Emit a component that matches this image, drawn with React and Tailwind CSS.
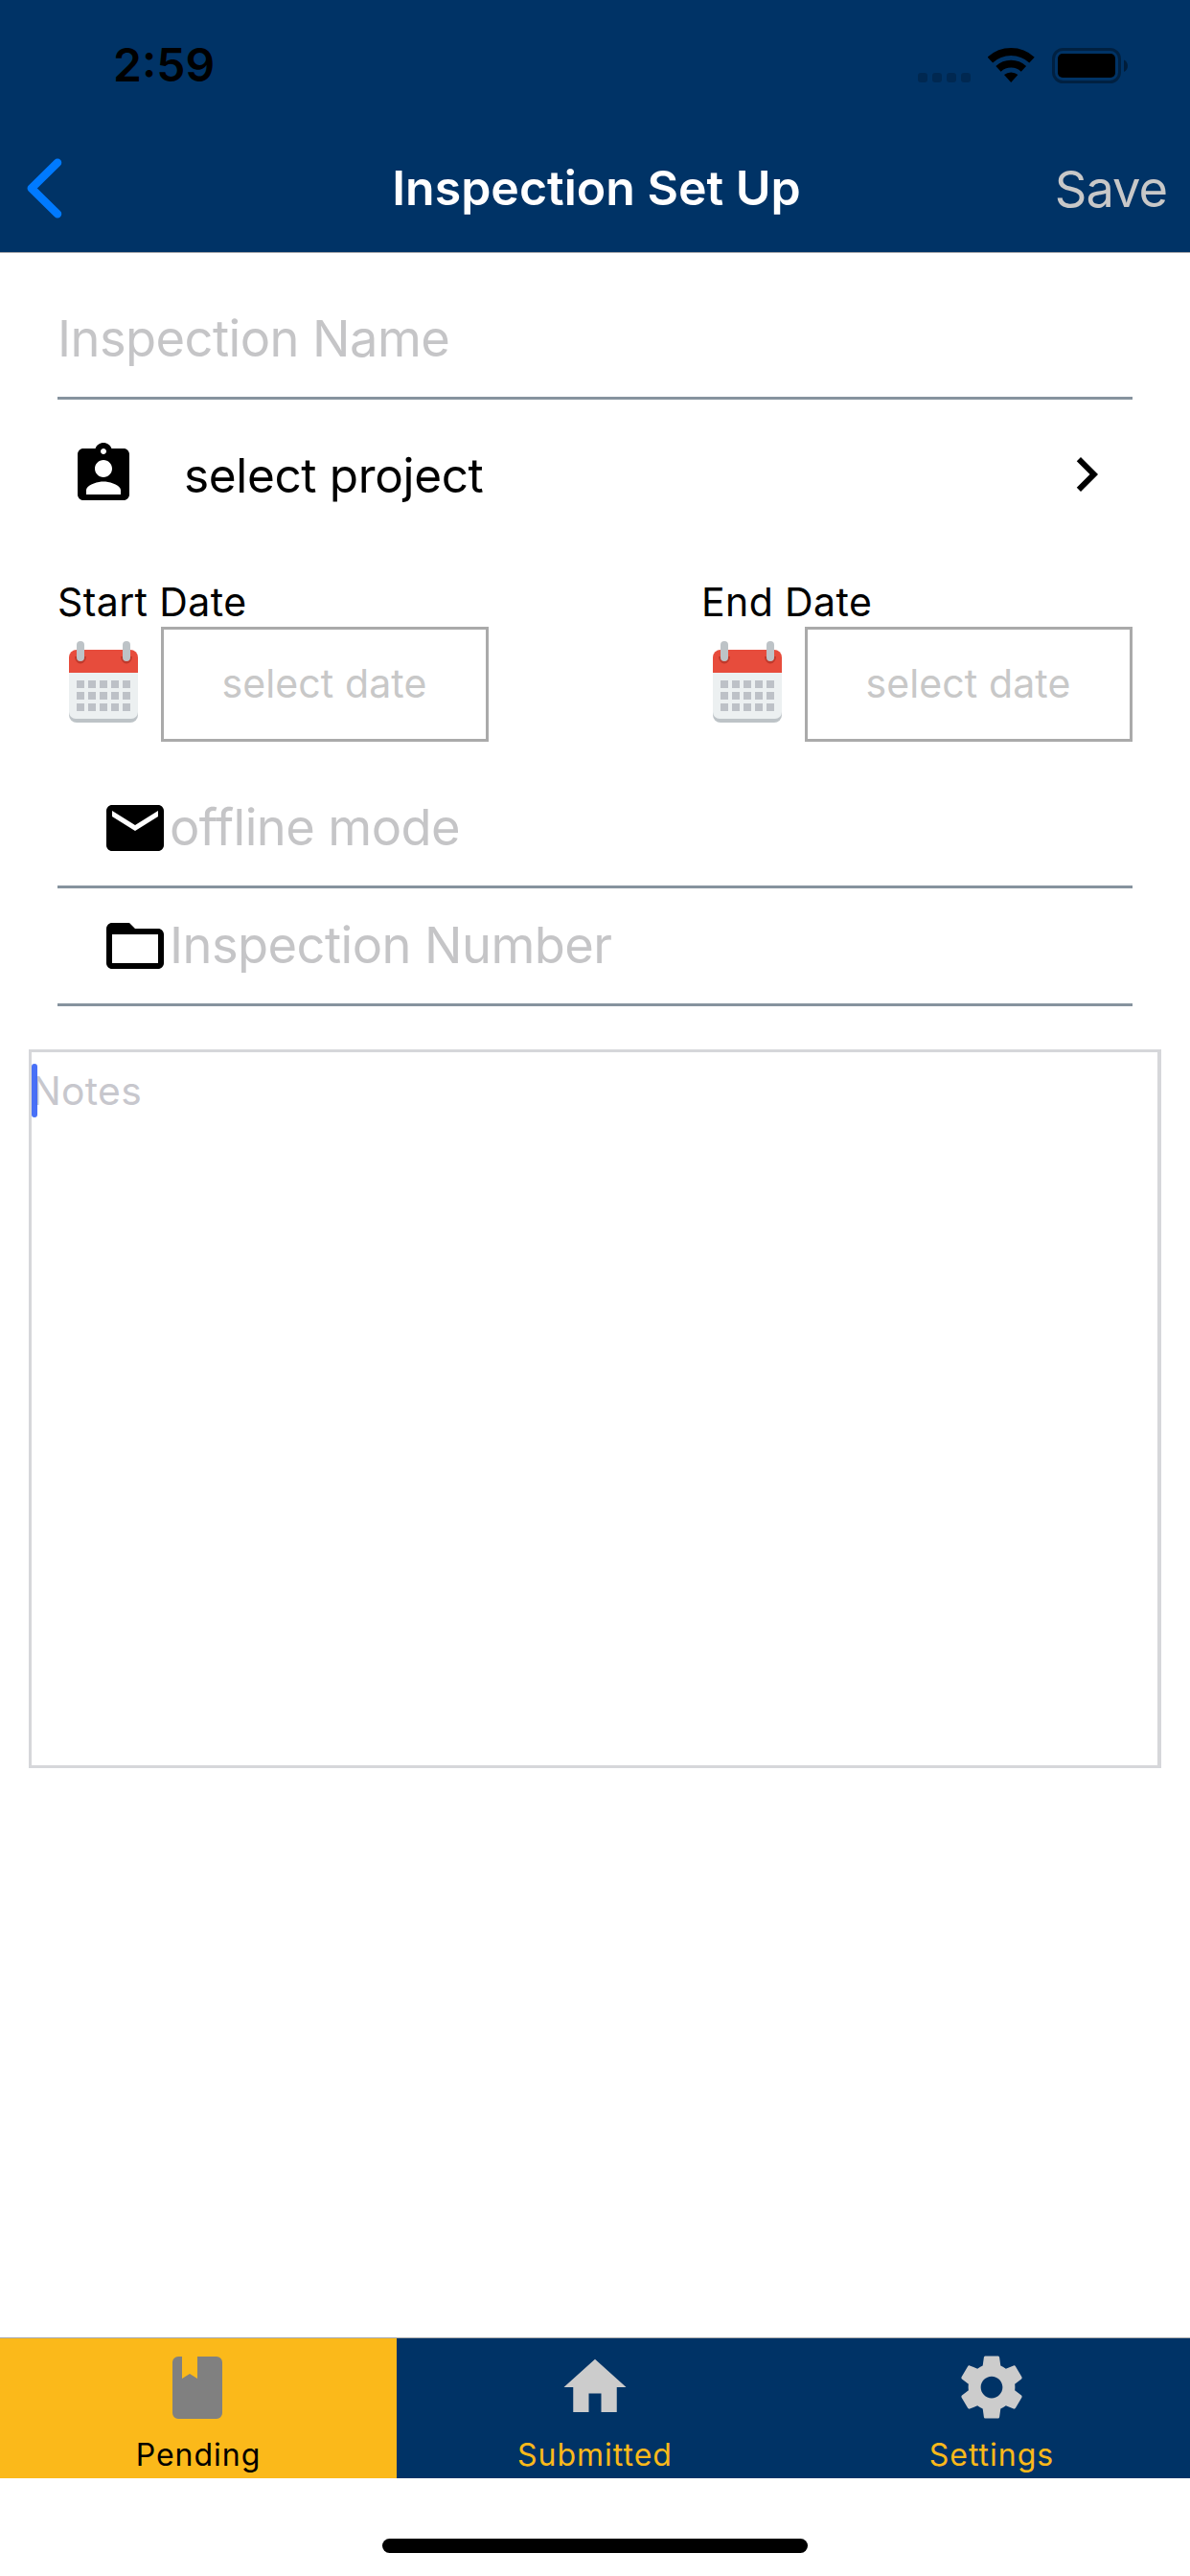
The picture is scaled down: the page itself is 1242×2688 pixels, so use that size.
import { MdAssignmentInd, MdChevronRight, MdEmail, MdFolderOpen, MdHome } from "react-icons/md";

function StatusBar() {
  return (
    <div className="flex h-[132px] items-center justify-between pt-1 pr-[65px] pl-[118px]">
      <span className="text-[48px] leading-[60px] font-semibold text-black">2:59</span>
      <div className="flex h-[37px] items-start">
        <div className="mt-[26px] mr-[18px] flex gap-[5px]">
          {[0, 1, 2, 3].map((i) => (
            <span key={i} className="size-[10px] rounded-[3px] bg-black/20" />
          ))}
        </div>
        <svg className="mr-[18px] h-[36px] w-[49px]" viewBox="0 0 49 36" fill="none" stroke="#000">
          <path d="M2.4 12.6a32 32 0 0 1 43.6 0" strokeWidth="8" />
          <path d="M11 21.8a19.4 19.4 0 0 1 26.4 0" strokeWidth="7.8" />
          <path d="M24.2 36l-7.2-8a11.3 11.3 0 0 1 14.4 0z" fill="#000" stroke="none" />
        </svg>
        <svg className="h-[37px] w-[79px]" viewBox="0 0 79 37">
          <rect x="1.5" y="1.5" width="69" height="34" rx="10" fill="none" stroke="#000" strokeOpacity=".36" strokeWidth="3" />
          <rect x="6" y="6" width="60" height="25" rx="5" />
          <path d="M75 12.5c5.3 2.2 5.3 10.3 0 12.5z" fillOpacity=".42" />
        </svg>
      </div>
    </div>
  );
}

function Header() {
  return (
    <header className="h-[264px] border-b border-[#a7a7aa] bg-[#003366]">
      <StatusBar />
      <div className="grid h-[131px] grid-cols-[1fr_auto_1fr] items-center pr-[24px] pl-[27px]">
        <svg className="-mt-[2px] h-[63px] w-[38px]" viewBox="0 0 38 63" fill="none" stroke="#007aff" strokeWidth="8.5" strokeLinecap="round" strokeLinejoin="round">
          <path d="M33 4.8L5.8 31.5 33 58.200" />
        </svg>
        <h1 className="-mt-[3px] text-[50px] leading-[60px] font-semibold text-white">Inspection Set Up</h1>
        <span className="-mt-[1px] justify-self-end text-[52.4px] leading-[60px] tracking-[-1px] text-[#c8c8c8]">Save</span>
      </div>
    </header>
  );
}

function Field({ icon, label }) {
  return (
    <div className="flex h-[123px] items-center border-b-[3px] border-[#86939e] text-[52.4px] leading-[60px] tracking-[-0.55px] text-[#c5c5c7]">
      {icon}
      <span className="-mt-[3px]">{label}</span>
    </div>
  );
}

function CalendarIcon() {
  return (
    <svg className="mx-[12px] h-[88px] w-[84px] shrink-0" viewBox="0 0 84 88">
      <path d="M0 70v9a8 8 0 0 0 8 8h56a8 8 0 0 0 8-8v-9z" fill="#bdc3c7" />
      <path d="M0 30v46a7 7 0 0 0 7 7h58a7 7 0 0 0 7-7V30z" fill="#ecf0f1" />
      <path d="M0 35V19a8 8 0 0 1 8-8h56a8 8 0 0 1 8 8v16z" fill="#e74c3c" />
      <path d="M6 18a6 7.5 0 0 0 12 0M54 18a6 7.5 0 0 0 12 0" fill="#c0392b" />
      <rect x="8" y="2" width="8" height="21" rx="4" fill="#bdc3c7" />
      <rect x="56" y="2" width="8" height="21" rx="4" fill="#bdc3c7" />
      {[43, 55, 67].map((y) =>
        [8, 20, 32, 44, 56].map((x) => (
          <rect key={`${x}-${y}`} x={x} y={y} width="8" height="8" fill="#bdc1c7" />
        ))
      )}
    </svg>
  );
}

function DateField({ label }) {
  return (
    <div className="w-[450px]">
      <div className="h-[51px] text-[41px] leading-[51px] tracking-[0.4px] text-black">{label}</div>
      <div className="flex">
        <div className="flex w-[108px] pt-[13px]">
          <CalendarIcon />
        </div>
        <div className="flex h-[120px] flex-1 items-center justify-center border-[3px] border-[#aaaaaa] pr-[1px] pb-[2px] text-[41px] leading-[51px] tracking-[0.1px] text-[#c8c8c8]">
          select date
        </div>
      </div>
    </div>
  );
}

function BookIcon() {
  return (
    <svg className="h-[78px] w-[78px]" viewBox="0 0 78 78" fill="#808080">
      <path d="M18 7h4v23l8-5 8 5V7h20a6 6 0 0 1 6 6v53a6 6 0 0 1-6 6H18a6 6 0 0 1-6-6V13a6 6 0 0 1 6-6z" />
    </svg>
  );
}

function GearIcon() {
  return (
    <svg className="h-[78px] w-[78px]" viewBox="0 0 24 24" fill="#cccccc">
      <path d="M19.43 12.98c.04-.32.07-.64.07-.98s-.03-.66-.07-.98l2.11-1.65c.19-.15.24-.42.12-.64l-2-3.46c-.12-.22-.39-.3-.61-.22l-2.49 1c-.52-.4-1.08-.73-1.69-.98l-.38-2.65C14.46 2.180 14.25 2 14 2h-4c-.25 0-.46.18-.49.42l-.38 2.65c-.61.25-1.17.59-1.69.98l-2.49-1c-.23-.09-.49 0-.61.22l-2 3.46c-.13.22-.07.49.12.64l2.11 1.65c-.04.32-.07.65-.07.98s.03.66.07.98l-2.11 1.65c-.19.15-.24.42-.12.64l2 3.46c.12.22.39.3.61.22l2.49-1c.52.4 1.08.73 1.69.98l.38 2.65c.03.24.24.42.49.42h4c.25 0 .46-.18.49-.42l.38-2.65c.61-.25 1.17-.59 1.69-.98l2.49 1c.23.09.49 0 .61-.22l2-3.46c.12-.22.07-.49-.12-.64l-2.11-1.65zM12 15.5c-1.93 0-3.5-1.57-3.5-3.5s1.57-3.5 3.5-3.5 3.5 1.57 3.5 3.5-1.57 3.5-3.5 3.5z" />
    </svg>
  );
}

function Tab({ icon, label, active }) {
  return (
    <div className={active ? "flex flex-col items-center bg-[#fbb91a] pt-[12px] text-black" : "flex flex-col items-center pt-[12px] text-[#fbb91a]"}>
      {icon}
      <span className="mt-[12px] text-[32px] leading-[40px] tracking-[1px]">{label}</span>
    </div>
  );
}

export default function App() {
  return (
    <div className="flex h-[2688px] w-[1242px] flex-col bg-white font-['Inter',sans-serif]">
      <Header />
      <main className="flex-1 pt-[30px]">
        <div className="px-[60px]">
          <Field label="Inspection Name" />
          <div className="flex h-[156px] items-center px-[12px] text-black">
            <MdAssignmentInd className="size-[72px]" />
            <span className="ml-[48px] flex-1 pt-[1px] text-[49.5px] leading-[60px] tracking-[-0.35px]">select project</span>
            <MdChevronRight className="size-[72px]" />
          </div>
          <div className="mt-[30px] mb-[30px] flex justify-between">
            <DateField label="Start Date" />
            <DateField label="End Date" />
          </div>
          <Field icon={<MdEmail className="ml-[45px] size-[72px] text-black" />} label="offline mode" />
          <Field icon={<MdFolderOpen className="ml-[45px] size-[72px] text-black" />} label="Inspection Number" />
        </div>
        <div className="relative mx-[30px] mt-[45px] h-[750px] border-[3px] border-r-4 border-[#d6d7da] pt-[12px] text-[40.8px] leading-[56px] tracking-[0.3px] text-[#c7c7cd]">
          Notes
          <span className="absolute top-[12px] left-0 h-[56px] w-[6px] rounded-full bg-[#3e68f7]/95" />
        </div>
      </main>
      <nav className="grid h-[147px] grid-cols-3 border-t border-[#a7a7aa] bg-[#003366]">
        <Tab active icon={<BookIcon />} label="Pending" />
        <Tab icon={<MdHome className="size-[78px] text-[#cccccc]" />} label="Submitted" />
        <Tab icon={<GearIcon />} label="Settings" />
      </nav>
      <div className="flex h-[102px] justify-center pt-[63px]">
        <div className="h-[15px] w-[444px] rounded-full bg-black" />
      </div>
    </div>
  );
}
